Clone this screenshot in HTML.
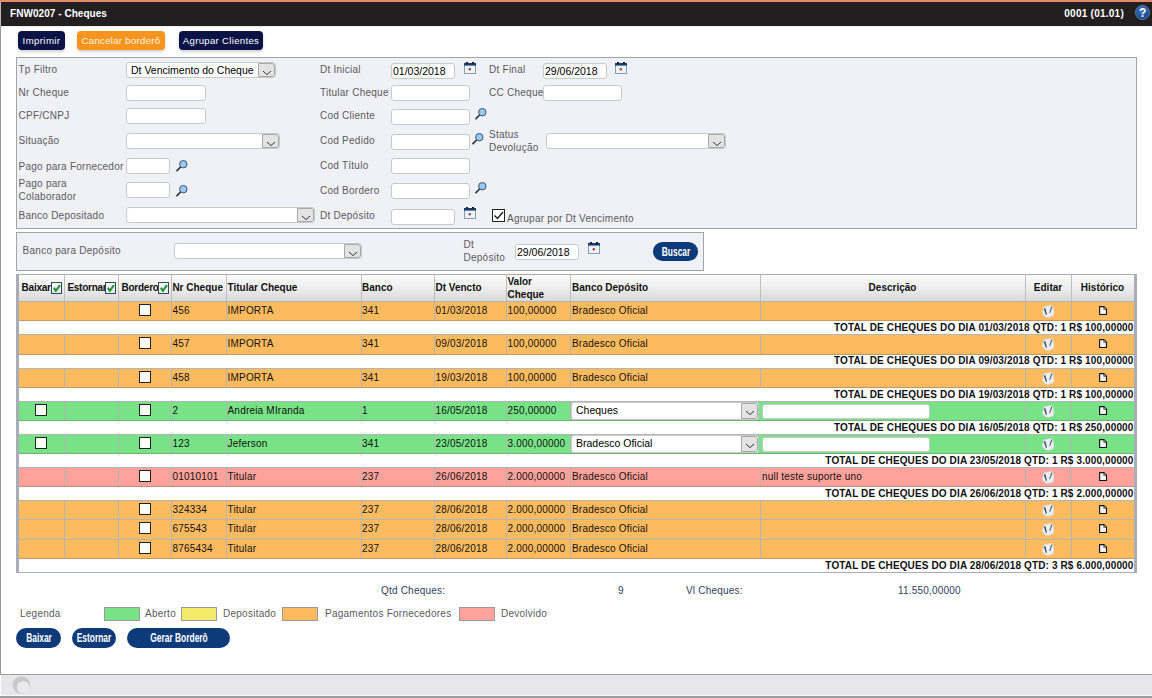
<!DOCTYPE html><html><head><meta charset="utf-8"><style>
*{box-sizing:border-box}
html,body{margin:0;padding:0;width:1152px;height:698px;overflow:hidden;background:#fff;font-family:"Liberation Sans",sans-serif}
.t{position:absolute;white-space:nowrap;line-height:12px;font-size:10px}
.lbl{color:#5a5a5a;letter-spacing:0.25px}
.blk{color:#111}
.hd{font-weight:bold;color:#111}
.inp{position:absolute;background:#fff;border:1px solid #c9c9c9;border-radius:3px;font-size:10.5px;line-height:14px;padding-left:1px;color:#000}
.sel{position:absolute;background:#fff;border:1px solid #c9c9c9;border-radius:3px;overflow:hidden}
.sv{position:absolute;left:4px;top:1px;font-size:10.5px;line-height:13px;color:#000;white-space:nowrap}
.sb{position:absolute;right:0;top:0;bottom:0;background:#e3e3e3;border:1px solid #a8a8a8;border-radius:0 3px 3px 0}
.ic{position:absolute}
.cb{position:absolute;background:#fff;border:1.5px solid #222;box-sizing:content-box}
.btn{position:absolute;color:#fff;font-size:10px;letter-spacing:0.1px;text-align:center;line-height:19px;white-space:nowrap}
</style></head><body>
<div style="position:absolute;left:0px;top:0px;width:1152px;height:2px;background:#e48a68"></div>
<div style="position:absolute;left:0px;top:2px;width:1152px;height:24px;background:#231f20"></div>
<div class="t " style="left:10px;top:8px;color:#fff;font-weight:bold;font-size:10px;letter-spacing:0.05px">FNW0207 - Cheques</div>
<div class="t" style="right:28px;top:8px;color:#fff;font-weight:bold;font-size:10px;letter-spacing:0.25px">0001 (01.01)</div>
<svg class="ic" style="left:1135px;top:5px" width="15" height="15" viewBox="0 0 15 15"><defs><radialGradient id="hg" cx="0.45" cy="0.35" r="0.7"><stop offset="0" stop-color="#3f76c0"/><stop offset="1" stop-color="#123f86"/></radialGradient></defs><circle cx="7.5" cy="7.5" r="7" fill="url(#hg)" stroke="#6a92c8" stroke-width="0.8"/><text x="7.6" y="12" text-anchor="middle" font-family="Liberation Sans" font-weight="bold" font-size="12" fill="#fff">?</text></svg>
<div style="position:absolute;left:0px;top:2px;width:1px;height:24px;background:#bdbdbd"></div>
<div style="position:absolute;left:1px;top:26px;width:1151px;height:1px;background:#ececec"></div>
<div style="position:absolute;left:0px;top:26px;width:1px;height:648px;background:#9a9a9a"></div>
<div class="btn" style="left:18px;top:31px;width:47px;height:19px;background:#0b1245;border-radius:4px;box-shadow:0 2px 3px rgba(0,0,0,0.18);font-size:9.6px;letter-spacing:0.4px;line-height:20px">Imprimir</div>
<div class="btn" style="left:77px;top:31px;width:88px;height:19px;background:#f7941d;border-radius:4px;color:#fff6e0;box-shadow:0 2px 3px rgba(0,0,0,0.18);font-size:9.6px;letter-spacing:0.3px;line-height:20px">Cancelar borderô</div>
<div class="btn" style="left:179px;top:31px;width:84px;height:19px;background:#0b1245;border-radius:4px;box-shadow:0 2px 3px rgba(0,0,0,0.18);font-size:9.6px;letter-spacing:0.3px;line-height:20px">Agrupar Clientes</div>
<div style="position:absolute;left:16px;top:57px;width:1121px;height:172px;background:#f0f0f7;border:1px solid #a4a4a4"></div>
<div class="t lbl" style="left:18.5px;top:64px;">Tp Filtro</div>
<div class="t lbl" style="left:18.5px;top:87px;">Nr Cheque</div>
<div class="t lbl" style="left:18.5px;top:110px;">CPF/CNPJ</div>
<div class="t lbl" style="left:18.5px;top:135px;">Situação</div>
<div class="t lbl" style="left:18.5px;top:160.5px;">Pago para Fornecedor</div>
<div class="t lbl" style="left:18.5px;top:178px;">Pago para</div>
<div class="t lbl" style="left:18.5px;top:191px;">Colaborador</div>
<div class="t lbl" style="left:18.5px;top:210px;">Banco Depositado</div>
<div class="t lbl" style="left:320px;top:64px;">Dt Inicial</div>
<div class="t lbl" style="left:320px;top:87px;">Titular Cheque</div>
<div class="t lbl" style="left:320px;top:109.5px;">Cod Cliente</div>
<div class="t lbl" style="left:320px;top:135px;">Cod Pedido</div>
<div class="t lbl" style="left:320px;top:159.7px;">Cod Título</div>
<div class="t lbl" style="left:320px;top:185px;">Cod Bordero</div>
<div class="t lbl" style="left:320px;top:210px;">Dt Depósito</div>
<div class="t lbl" style="left:489px;top:64px;">Dt Final</div>
<div class="t lbl" style="left:489px;top:87px;">CC Cheque</div>
<div class="t lbl" style="left:489px;top:129px;">Status</div>
<div class="t lbl" style="left:489px;top:142px;">Devolução</div>
<div class="sel" style="left:126px;top:62px;width:150px;height:16px"><span class="sv">Dt Vencimento do Cheque</span><div class="sb" style="width:17px"><svg width="10" height="6" viewBox="0 0 10 6" style="position:absolute;left:3px;top:6px"><path d="M1 1 L5 4.6 L9 1" fill="none" stroke="#333" stroke-width="1"/></svg></div></div>
<div class="inp" style="left:126px;top:85px;width:80px;height:16px"></div>
<div class="inp" style="left:126px;top:108px;width:80px;height:16px"></div>
<div class="sel" style="left:126px;top:133px;width:154px;height:16px"><span class="sv"></span><div class="sb" style="width:17px"><svg width="10" height="6" viewBox="0 0 10 6" style="position:absolute;left:3px;top:6px"><path d="M1 1 L5 4.6 L9 1" fill="none" stroke="#333" stroke-width="1"/></svg></div></div>
<div class="inp" style="left:126px;top:158px;width:44px;height:16px"></div>
<svg class="ic" style="left:176px;top:160px" width="13" height="12" viewBox="0 0 13 12"><path d="M1 10.6 L4.6 7" stroke="#333" stroke-width="1.7" stroke-linecap="round"/><circle cx="7.3" cy="4.2" r="3.7" fill="#9ccaf6" stroke="#3a4f6a" stroke-width="1"/></svg>
<div class="inp" style="left:126px;top:182px;width:44px;height:16px"></div>
<svg class="ic" style="left:176px;top:185px" width="13" height="12" viewBox="0 0 13 12"><path d="M1 10.6 L4.6 7" stroke="#333" stroke-width="1.7" stroke-linecap="round"/><circle cx="7.3" cy="4.2" r="3.7" fill="#9ccaf6" stroke="#3a4f6a" stroke-width="1"/></svg>
<div class="sel" style="left:126px;top:207px;width:189px;height:16px"><span class="sv"></span><div class="sb" style="width:17px"><svg width="10" height="6" viewBox="0 0 10 6" style="position:absolute;left:3px;top:6px"><path d="M1 1 L5 4.6 L9 1" fill="none" stroke="#333" stroke-width="1"/></svg></div></div>
<div class="inp" style="left:391px;top:63px;width:64px;height:16px">01/03/2018</div>
<svg class="ic" style="left:464px;top:62px" width="12" height="12" viewBox="0 0 12 12"><rect x="0.5" y="2.5" width="11" height="9" fill="#e8f6f6" stroke="#8a9ab0" stroke-width="1"/><rect x="0" y="1" width="12" height="2.6" fill="#1c3a6a"/><rect x="2" y="0" width="2" height="1.5" fill="#0a1a3a"/><rect x="8" y="0" width="2" height="1.5" fill="#0a1a3a"/><circle cx="5.8" cy="7.2" r="1.2" fill="#c03030"/></svg>
<div class="inp" style="left:391px;top:85px;width:79px;height:16px"></div>
<div class="inp" style="left:391px;top:109px;width:79px;height:16px"></div>
<svg class="ic" style="left:475px;top:108px" width="13" height="12" viewBox="0 0 13 12"><path d="M1 10.6 L4.6 7" stroke="#333" stroke-width="1.7" stroke-linecap="round"/><circle cx="7.3" cy="4.2" r="3.7" fill="#9ccaf6" stroke="#3a4f6a" stroke-width="1"/></svg>
<div class="inp" style="left:391px;top:134px;width:79px;height:16px"></div>
<svg class="ic" style="left:472px;top:133px" width="13" height="12" viewBox="0 0 13 12"><path d="M1 10.6 L4.6 7" stroke="#333" stroke-width="1.7" stroke-linecap="round"/><circle cx="7.3" cy="4.2" r="3.7" fill="#9ccaf6" stroke="#3a4f6a" stroke-width="1"/></svg>
<div class="inp" style="left:391px;top:158px;width:79px;height:16px"></div>
<div class="inp" style="left:391px;top:183px;width:79px;height:16px"></div>
<svg class="ic" style="left:475px;top:182px" width="13" height="12" viewBox="0 0 13 12"><path d="M1 10.6 L4.6 7" stroke="#333" stroke-width="1.7" stroke-linecap="round"/><circle cx="7.3" cy="4.2" r="3.7" fill="#9ccaf6" stroke="#3a4f6a" stroke-width="1"/></svg>
<div class="inp" style="left:391px;top:209px;width:64px;height:16px"></div>
<svg class="ic" style="left:464px;top:207px" width="12" height="12" viewBox="0 0 12 12"><rect x="0.5" y="2.5" width="11" height="9" fill="#e8f6f6" stroke="#8a9ab0" stroke-width="1"/><rect x="0" y="1" width="12" height="2.6" fill="#1c3a6a"/><rect x="2" y="0" width="2" height="1.5" fill="#0a1a3a"/><rect x="8" y="0" width="2" height="1.5" fill="#0a1a3a"/><circle cx="5.8" cy="7.2" r="1.2" fill="#c03030"/></svg>
<div class="cb" style="left:492px;top:209px;width:11px;height:11px"><svg width="11" height="11" viewBox="0 0 11 11" style="position:absolute;left:0;top:0"><path d="M1.5 5.5 L4.5 8.5 L10 2" fill="none" stroke="#222" stroke-width="1.5"/></svg></div>
<div class="t lbl" style="left:507px;top:213px;">Agrupar por Dt Vencimento</div>
<div class="inp" style="left:543px;top:63px;width:64px;height:16px">29/06/2018</div>
<svg class="ic" style="left:615px;top:62px" width="12" height="12" viewBox="0 0 12 12"><rect x="0.5" y="2.5" width="11" height="9" fill="#e8f6f6" stroke="#8a9ab0" stroke-width="1"/><rect x="0" y="1" width="12" height="2.6" fill="#1c3a6a"/><rect x="2" y="0" width="2" height="1.5" fill="#0a1a3a"/><rect x="8" y="0" width="2" height="1.5" fill="#0a1a3a"/><circle cx="5.8" cy="7.2" r="1.2" fill="#c03030"/></svg>
<div class="inp" style="left:543px;top:85px;width:79px;height:16px"></div>
<div class="sel" style="left:546px;top:133px;width:180px;height:16px"><span class="sv"></span><div class="sb" style="width:17px"><svg width="10" height="6" viewBox="0 0 10 6" style="position:absolute;left:3px;top:6px"><path d="M1 1 L5 4.6 L9 1" fill="none" stroke="#333" stroke-width="1"/></svg></div></div>
<div style="position:absolute;left:16px;top:232px;width:688px;height:39px;background:#f0f0f7;border:1px solid #a4a4a4"></div>
<div class="t lbl" style="left:22.6px;top:245px;">Banco para Depósito</div>
<div class="sel" style="left:174px;top:243px;width:188px;height:16px"><span class="sv"></span><div class="sb" style="width:17px"><svg width="10" height="6" viewBox="0 0 10 6" style="position:absolute;left:3px;top:6px"><path d="M1 1 L5 4.6 L9 1" fill="none" stroke="#333" stroke-width="1"/></svg></div></div>
<div class="t lbl" style="left:463.5px;top:239px;">Dt</div>
<div class="t lbl" style="left:463.5px;top:252px;">Depósito</div>
<div class="inp" style="left:515px;top:244px;width:64px;height:16px">29/06/2018</div>
<svg class="ic" style="left:588px;top:242px" width="12" height="12" viewBox="0 0 12 12"><rect x="0.5" y="2.5" width="11" height="9" fill="#e8f6f6" stroke="#8a9ab0" stroke-width="1"/><rect x="0" y="1" width="12" height="2.6" fill="#1c3a6a"/><rect x="2" y="0" width="2" height="1.5" fill="#0a1a3a"/><rect x="8" y="0" width="2" height="1.5" fill="#0a1a3a"/><circle cx="5.8" cy="7.2" r="1.2" fill="#c03030"/></svg>
<div class="btn" style="left:653px;top:242px;width:45px;height:19px;background:#0d3a78;border-radius:10px;font-weight:bold;font-size:12px;letter-spacing:0;line-height:20px"><span style="position:absolute;left:50%;top:0;transform:translateX(-50%) scaleX(0.7)">Buscar</span></div>
<div style="position:absolute;left:16px;top:274px;width:1121px;height:299px;background:#fff"></div>
<div style="position:absolute;left:19px;top:274px;width:1115px;height:27px;background:linear-gradient(#fdfdfd,#f0f0f0 45%,#d9d9d9)"></div>
<div style="position:absolute;left:16px;top:274px;width:1121px;height:1px;background:#a9a9a9"></div>
<div style="position:absolute;left:19px;top:301px;width:1115px;height:1px;background:#b0b0b0"></div>
<div style="position:absolute;left:64px;top:274px;width:1px;height:27px;background:#bdbdbd"></div>
<div style="position:absolute;left:118px;top:274px;width:1px;height:27px;background:#bdbdbd"></div>
<div style="position:absolute;left:171px;top:274px;width:1px;height:27px;background:#bdbdbd"></div>
<div style="position:absolute;left:226px;top:274px;width:1px;height:27px;background:#bdbdbd"></div>
<div style="position:absolute;left:361px;top:274px;width:1px;height:27px;background:#bdbdbd"></div>
<div style="position:absolute;left:434px;top:274px;width:1px;height:27px;background:#bdbdbd"></div>
<div style="position:absolute;left:506px;top:274px;width:1px;height:27px;background:#bdbdbd"></div>
<div style="position:absolute;left:570px;top:274px;width:1px;height:27px;background:#bdbdbd"></div>
<div style="position:absolute;left:760px;top:274px;width:1px;height:27px;background:#bdbdbd"></div>
<div style="position:absolute;left:1025px;top:274px;width:1px;height:27px;background:#bdbdbd"></div>
<div style="position:absolute;left:1071px;top:274px;width:1px;height:27px;background:#bdbdbd"></div>
<div class="t hd" style="left:21.6px;top:281.5px;letter-spacing:-0.25px">Baixar</div>
<div class="t hd" style="left:67.4px;top:281.5px;letter-spacing:-0.25px">Estornar</div>
<div class="t hd" style="left:121.5px;top:281.5px;letter-spacing:-0.25px">Bordero</div>
<div class="t hd" style="left:172.4px;top:281.5px;">Nr Cheque</div>
<div class="t hd" style="left:227.5px;top:281.5px;">Titular Cheque</div>
<div class="t hd" style="left:362px;top:281.5px;">Banco</div>
<div class="t hd" style="left:435.5px;top:281.5px;">Dt Vencto</div>
<div class="t hd" style="left:572px;top:281.5px;">Banco Depósito</div>
<div class="t hd" style="left:507.5px;top:276.3px;">Valor</div>
<div class="t hd" style="left:507.5px;top:288.5px;">Cheque</div>
<div class="t hd" style="left:760px;width:265px;text-align:center;top:281.5px">Descrição</div>
<div class="t hd" style="left:1025px;width:46px;text-align:center;top:281.5px">Editar</div>
<div class="t hd" style="left:1071px;width:63px;text-align:center;top:281.5px">Histórico</div>
<div style="position:absolute;left:51px;top:282px;width:11px;height:12px;border:1.1px solid #33485a;background:linear-gradient(#f4f8f8,#e2ecea)"><svg width="9" height="10" viewBox="0 0 9 10" style="position:absolute;left:0.5px;top:0.8px"><path d="M1 3.8 L2.8 6.9 L7 1.2" fill="none" stroke="#22902c" stroke-width="2" stroke-linejoin="round"/></svg></div>
<div style="position:absolute;left:105px;top:282px;width:11px;height:12px;border:1.1px solid #33485a;background:linear-gradient(#f4f8f8,#e2ecea)"><svg width="9" height="10" viewBox="0 0 9 10" style="position:absolute;left:0.5px;top:0.8px"><path d="M1 3.8 L2.8 6.9 L7 1.2" fill="none" stroke="#22902c" stroke-width="2" stroke-linejoin="round"/></svg></div>
<div style="position:absolute;left:158px;top:282px;width:11px;height:12px;border:1.1px solid #33485a;background:linear-gradient(#f4f8f8,#e2ecea)"><svg width="9" height="10" viewBox="0 0 9 10" style="position:absolute;left:0.5px;top:0.8px"><path d="M1 3.8 L2.8 6.9 L7 1.2" fill="none" stroke="#22902c" stroke-width="2" stroke-linejoin="round"/></svg></div>
<div style="position:absolute;left:19px;top:301px;width:1115px;height:20px;background:#fdbb5f"></div>
<div style="position:absolute;left:19px;top:301px;width:1115px;height:1px;background:#b4b4b4"></div>
<div style="position:absolute;left:19px;top:320px;width:1115px;height:1px;background:rgba(90,90,90,0.35)"></div>
<div style="position:absolute;left:64px;top:301px;width:1px;height:19px;background:#b4b4b4"></div>
<div style="position:absolute;left:118px;top:301px;width:1px;height:19px;background:#b4b4b4"></div>
<div style="position:absolute;left:171px;top:301px;width:1px;height:19px;background:#b4b4b4"></div>
<div style="position:absolute;left:226px;top:301px;width:1px;height:19px;background:#b4b4b4"></div>
<div style="position:absolute;left:361px;top:301px;width:1px;height:19px;background:#b4b4b4"></div>
<div style="position:absolute;left:434px;top:301px;width:1px;height:19px;background:#b4b4b4"></div>
<div style="position:absolute;left:506px;top:301px;width:1px;height:19px;background:#b4b4b4"></div>
<div style="position:absolute;left:570px;top:301px;width:1px;height:19px;background:#b4b4b4"></div>
<div style="position:absolute;left:760px;top:301px;width:1px;height:19px;background:#b4b4b4"></div>
<div style="position:absolute;left:1025px;top:301px;width:1px;height:19px;background:#b4b4b4"></div>
<div style="position:absolute;left:1071px;top:301px;width:1px;height:19px;background:#b4b4b4"></div>
<div class="cb" style="left:139px;top:304.2px;width:10px;height:10px"></div>
<div class="t blk" style="left:172.5px;top:305.0px;letter-spacing:0.2px">456</div>
<div class="t blk" style="left:227.5px;top:305.0px;letter-spacing:0.2px">IMPORTA</div>
<div class="t blk" style="left:362px;top:305.0px;letter-spacing:0.2px">341</div>
<div class="t blk" style="left:435.5px;top:305.0px;letter-spacing:0.2px">01/03/2018</div>
<div class="t blk" style="left:507.5px;top:305.0px;letter-spacing:0.2px">100,00000</div>
<div class="t blk" style="left:572px;top:305.0px;letter-spacing:0.2px">Bradesco Oficial</div>
<svg class="ic" style="left:1042px;top:304.7px" width="13" height="13" viewBox="0 0 13 13"><path d="M2 1.8 L9.6 0.2 L11.3 2.6 L12 8 L11 11 L6.5 12.4 L3.5 12 L0.2 8.5 L1 5 Z" fill="#eceff1" stroke="#d0d4d8" stroke-width="0.6"/><path d="M1.8 3.6 L3.4 3.2 L4.9 9.6 L3.9 10 Z" fill="#34495a"/><path d="M9.2 1.4 L10.4 1.8 L8.1 8.2 L7.3 7.8 Z" fill="#4a6070"/></svg>
<svg class="ic" style="left:1098.5px;top:306px" width="9" height="10" viewBox="0 0 9 10"><path d="M0.6 0.6 H5 L7.5 3.1 V8.5 H0.6 Z" fill="#f4f4f4" stroke="#111" stroke-width="1.1" stroke-linejoin="round"/><path d="M4.8 0.9 V3.3 H7.2" fill="#bbb" stroke="#222" stroke-width="0.7"/></svg>
<div class="t" style="right:18.5px;top:322.0px;font-weight:bold;color:#111;font-size:10px;letter-spacing:0.13px">TOTAL DE CHEQUES DO DIA 01/03/2018 QTD: 1 R$ 100,00000</div>
<div style="position:absolute;left:19px;top:334px;width:1115px;height:21px;background:#fdbb5f"></div>
<div style="position:absolute;left:19px;top:334px;width:1115px;height:1px;background:#b4b4b4"></div>
<div style="position:absolute;left:19px;top:354px;width:1115px;height:1px;background:rgba(90,90,90,0.35)"></div>
<div style="position:absolute;left:64px;top:334px;width:1px;height:20px;background:#b4b4b4"></div>
<div style="position:absolute;left:118px;top:334px;width:1px;height:20px;background:#b4b4b4"></div>
<div style="position:absolute;left:171px;top:334px;width:1px;height:20px;background:#b4b4b4"></div>
<div style="position:absolute;left:226px;top:334px;width:1px;height:20px;background:#b4b4b4"></div>
<div style="position:absolute;left:361px;top:334px;width:1px;height:20px;background:#b4b4b4"></div>
<div style="position:absolute;left:434px;top:334px;width:1px;height:20px;background:#b4b4b4"></div>
<div style="position:absolute;left:506px;top:334px;width:1px;height:20px;background:#b4b4b4"></div>
<div style="position:absolute;left:570px;top:334px;width:1px;height:20px;background:#b4b4b4"></div>
<div style="position:absolute;left:760px;top:334px;width:1px;height:20px;background:#b4b4b4"></div>
<div style="position:absolute;left:1025px;top:334px;width:1px;height:20px;background:#b4b4b4"></div>
<div style="position:absolute;left:1071px;top:334px;width:1px;height:20px;background:#b4b4b4"></div>
<div class="cb" style="left:139px;top:337.2px;width:10px;height:10px"></div>
<div class="t blk" style="left:172.5px;top:338.0px;letter-spacing:0.2px">457</div>
<div class="t blk" style="left:227.5px;top:338.0px;letter-spacing:0.2px">IMPORTA</div>
<div class="t blk" style="left:362px;top:338.0px;letter-spacing:0.2px">341</div>
<div class="t blk" style="left:435.5px;top:338.0px;letter-spacing:0.2px">09/03/2018</div>
<div class="t blk" style="left:507.5px;top:338.0px;letter-spacing:0.2px">100,00000</div>
<div class="t blk" style="left:572px;top:338.0px;letter-spacing:0.2px">Bradesco Oficial</div>
<svg class="ic" style="left:1042px;top:337.7px" width="13" height="13" viewBox="0 0 13 13"><path d="M2 1.8 L9.6 0.2 L11.3 2.6 L12 8 L11 11 L6.5 12.4 L3.5 12 L0.2 8.5 L1 5 Z" fill="#eceff1" stroke="#d0d4d8" stroke-width="0.6"/><path d="M1.8 3.6 L3.4 3.2 L4.9 9.6 L3.9 10 Z" fill="#34495a"/><path d="M9.2 1.4 L10.4 1.8 L8.1 8.2 L7.3 7.8 Z" fill="#4a6070"/></svg>
<svg class="ic" style="left:1098.5px;top:339px" width="9" height="10" viewBox="0 0 9 10"><path d="M0.6 0.6 H5 L7.5 3.1 V8.5 H0.6 Z" fill="#f4f4f4" stroke="#111" stroke-width="1.1" stroke-linejoin="round"/><path d="M4.8 0.9 V3.3 H7.2" fill="#bbb" stroke="#222" stroke-width="0.7"/></svg>
<div class="t" style="right:18.5px;top:355.0px;font-weight:bold;color:#111;font-size:10px;letter-spacing:0.13px">TOTAL DE CHEQUES DO DIA 09/03/2018 QTD: 1 R$ 100,00000</div>
<div style="position:absolute;left:19px;top:368px;width:1115px;height:20px;background:#fdbb5f"></div>
<div style="position:absolute;left:19px;top:368px;width:1115px;height:1px;background:#b4b4b4"></div>
<div style="position:absolute;left:19px;top:387px;width:1115px;height:1px;background:rgba(90,90,90,0.35)"></div>
<div style="position:absolute;left:64px;top:368px;width:1px;height:19px;background:#b4b4b4"></div>
<div style="position:absolute;left:118px;top:368px;width:1px;height:19px;background:#b4b4b4"></div>
<div style="position:absolute;left:171px;top:368px;width:1px;height:19px;background:#b4b4b4"></div>
<div style="position:absolute;left:226px;top:368px;width:1px;height:19px;background:#b4b4b4"></div>
<div style="position:absolute;left:361px;top:368px;width:1px;height:19px;background:#b4b4b4"></div>
<div style="position:absolute;left:434px;top:368px;width:1px;height:19px;background:#b4b4b4"></div>
<div style="position:absolute;left:506px;top:368px;width:1px;height:19px;background:#b4b4b4"></div>
<div style="position:absolute;left:570px;top:368px;width:1px;height:19px;background:#b4b4b4"></div>
<div style="position:absolute;left:760px;top:368px;width:1px;height:19px;background:#b4b4b4"></div>
<div style="position:absolute;left:1025px;top:368px;width:1px;height:19px;background:#b4b4b4"></div>
<div style="position:absolute;left:1071px;top:368px;width:1px;height:19px;background:#b4b4b4"></div>
<div class="cb" style="left:139px;top:371.2px;width:10px;height:10px"></div>
<div class="t blk" style="left:172.5px;top:372.0px;letter-spacing:0.2px">458</div>
<div class="t blk" style="left:227.5px;top:372.0px;letter-spacing:0.2px">IMPORTA</div>
<div class="t blk" style="left:362px;top:372.0px;letter-spacing:0.2px">341</div>
<div class="t blk" style="left:435.5px;top:372.0px;letter-spacing:0.2px">19/03/2018</div>
<div class="t blk" style="left:507.5px;top:372.0px;letter-spacing:0.2px">100,00000</div>
<div class="t blk" style="left:572px;top:372.0px;letter-spacing:0.2px">Bradesco Oficial</div>
<svg class="ic" style="left:1042px;top:371.7px" width="13" height="13" viewBox="0 0 13 13"><path d="M2 1.8 L9.6 0.2 L11.3 2.6 L12 8 L11 11 L6.5 12.4 L3.5 12 L0.2 8.5 L1 5 Z" fill="#eceff1" stroke="#d0d4d8" stroke-width="0.6"/><path d="M1.8 3.6 L3.4 3.2 L4.9 9.6 L3.9 10 Z" fill="#34495a"/><path d="M9.2 1.4 L10.4 1.8 L8.1 8.2 L7.3 7.8 Z" fill="#4a6070"/></svg>
<svg class="ic" style="left:1098.5px;top:373px" width="9" height="10" viewBox="0 0 9 10"><path d="M0.6 0.6 H5 L7.5 3.1 V8.5 H0.6 Z" fill="#f4f4f4" stroke="#111" stroke-width="1.1" stroke-linejoin="round"/><path d="M4.8 0.9 V3.3 H7.2" fill="#bbb" stroke="#222" stroke-width="0.7"/></svg>
<div class="t" style="right:18.5px;top:389.0px;font-weight:bold;color:#111;font-size:10px;letter-spacing:0.13px">TOTAL DE CHEQUES DO DIA 19/03/2018 QTD: 1 R$ 100,00000</div>
<div style="position:absolute;left:19px;top:401px;width:1115px;height:20px;background:#78e386"></div>
<div style="position:absolute;left:19px;top:401px;width:1115px;height:1px;background:#b4b4b4"></div>
<div style="position:absolute;left:19px;top:420px;width:1115px;height:1px;background:rgba(90,90,90,0.35)"></div>
<div style="position:absolute;left:64px;top:401px;width:1px;height:19px;background:#b4b4b4"></div>
<div style="position:absolute;left:118px;top:401px;width:1px;height:19px;background:#b4b4b4"></div>
<div style="position:absolute;left:171px;top:401px;width:1px;height:19px;background:#b4b4b4"></div>
<div style="position:absolute;left:226px;top:401px;width:1px;height:19px;background:#b4b4b4"></div>
<div style="position:absolute;left:361px;top:401px;width:1px;height:19px;background:#b4b4b4"></div>
<div style="position:absolute;left:434px;top:401px;width:1px;height:19px;background:#b4b4b4"></div>
<div style="position:absolute;left:506px;top:401px;width:1px;height:19px;background:#b4b4b4"></div>
<div style="position:absolute;left:570px;top:401px;width:1px;height:19px;background:#b4b4b4"></div>
<div style="position:absolute;left:1025px;top:401px;width:1px;height:19px;background:#b4b4b4"></div>
<div style="position:absolute;left:1071px;top:401px;width:1px;height:19px;background:#b4b4b4"></div>
<div class="cb" style="left:139px;top:404.2px;width:10px;height:10px"></div>
<div class="cb" style="left:35px;top:404.2px;width:10px;height:10px"></div>
<div class="t blk" style="left:172.5px;top:405.0px;letter-spacing:0.2px">2</div>
<div class="t blk" style="left:227.5px;top:405.0px;letter-spacing:0.2px">Andreia MIranda</div>
<div class="t blk" style="left:362px;top:405.0px;letter-spacing:0.2px">1</div>
<div class="t blk" style="left:435.5px;top:405.0px;letter-spacing:0.2px">16/05/2018</div>
<div class="t blk" style="left:507.5px;top:405.0px;letter-spacing:0.2px">250,00000</div>
<div class="sel" style="left:571px;top:402px;width:188px;height:18px"><span class="sv">Cheques</span><div class="sb" style="width:17px"><svg width="10" height="6" viewBox="0 0 10 6" style="position:absolute;left:3px;top:6px"><path d="M1 1 L5 4.6 L9 1" fill="none" stroke="#333" stroke-width="1"/></svg></div></div>
<div class="inp" style="left:762px;top:404px;width:168px;height:15px"></div>
<svg class="ic" style="left:1042px;top:404.7px" width="13" height="13" viewBox="0 0 13 13"><path d="M2 1.8 L9.6 0.2 L11.3 2.6 L12 8 L11 11 L6.5 12.4 L3.5 12 L0.2 8.5 L1 5 Z" fill="#eceff1" stroke="#d0d4d8" stroke-width="0.6"/><path d="M1.8 3.6 L3.4 3.2 L4.9 9.6 L3.9 10 Z" fill="#34495a"/><path d="M9.2 1.4 L10.4 1.8 L8.1 8.2 L7.3 7.8 Z" fill="#4a6070"/></svg>
<svg class="ic" style="left:1098.5px;top:406px" width="9" height="10" viewBox="0 0 9 10"><path d="M0.6 0.6 H5 L7.5 3.1 V8.5 H0.6 Z" fill="#f4f4f4" stroke="#111" stroke-width="1.1" stroke-linejoin="round"/><path d="M4.8 0.9 V3.3 H7.2" fill="#bbb" stroke="#222" stroke-width="0.7"/></svg>
<div class="t" style="right:18.5px;top:422.0px;font-weight:bold;color:#111;font-size:10px;letter-spacing:0.13px">TOTAL DE CHEQUES DO DIA 16/05/2018 QTD: 1 R$ 250,00000</div>
<div style="position:absolute;left:19px;top:434px;width:1115px;height:20px;background:#78e386"></div>
<div style="position:absolute;left:19px;top:434px;width:1115px;height:1px;background:#b4b4b4"></div>
<div style="position:absolute;left:19px;top:453px;width:1115px;height:1px;background:rgba(90,90,90,0.35)"></div>
<div style="position:absolute;left:64px;top:434px;width:1px;height:19px;background:#b4b4b4"></div>
<div style="position:absolute;left:118px;top:434px;width:1px;height:19px;background:#b4b4b4"></div>
<div style="position:absolute;left:171px;top:434px;width:1px;height:19px;background:#b4b4b4"></div>
<div style="position:absolute;left:226px;top:434px;width:1px;height:19px;background:#b4b4b4"></div>
<div style="position:absolute;left:361px;top:434px;width:1px;height:19px;background:#b4b4b4"></div>
<div style="position:absolute;left:434px;top:434px;width:1px;height:19px;background:#b4b4b4"></div>
<div style="position:absolute;left:506px;top:434px;width:1px;height:19px;background:#b4b4b4"></div>
<div style="position:absolute;left:570px;top:434px;width:1px;height:19px;background:#b4b4b4"></div>
<div style="position:absolute;left:1025px;top:434px;width:1px;height:19px;background:#b4b4b4"></div>
<div style="position:absolute;left:1071px;top:434px;width:1px;height:19px;background:#b4b4b4"></div>
<div class="cb" style="left:139px;top:437.2px;width:10px;height:10px"></div>
<div class="cb" style="left:35px;top:437.2px;width:10px;height:10px"></div>
<div class="t blk" style="left:172.5px;top:438.0px;letter-spacing:0.2px">123</div>
<div class="t blk" style="left:227.5px;top:438.0px;letter-spacing:0.2px">Jeferson</div>
<div class="t blk" style="left:362px;top:438.0px;letter-spacing:0.2px">341</div>
<div class="t blk" style="left:435.5px;top:438.0px;letter-spacing:0.2px">23/05/2018</div>
<div class="t blk" style="left:507.5px;top:438.0px;letter-spacing:0.2px">3.000,00000</div>
<div class="sel" style="left:571px;top:435px;width:188px;height:18px"><span class="sv">Bradesco Oficial</span><div class="sb" style="width:17px"><svg width="10" height="6" viewBox="0 0 10 6" style="position:absolute;left:3px;top:6px"><path d="M1 1 L5 4.6 L9 1" fill="none" stroke="#333" stroke-width="1"/></svg></div></div>
<div class="inp" style="left:762px;top:437px;width:168px;height:15px"></div>
<svg class="ic" style="left:1042px;top:437.7px" width="13" height="13" viewBox="0 0 13 13"><path d="M2 1.8 L9.6 0.2 L11.3 2.6 L12 8 L11 11 L6.5 12.4 L3.5 12 L0.2 8.5 L1 5 Z" fill="#eceff1" stroke="#d0d4d8" stroke-width="0.6"/><path d="M1.8 3.6 L3.4 3.2 L4.9 9.6 L3.9 10 Z" fill="#34495a"/><path d="M9.2 1.4 L10.4 1.8 L8.1 8.2 L7.3 7.8 Z" fill="#4a6070"/></svg>
<svg class="ic" style="left:1098.5px;top:439px" width="9" height="10" viewBox="0 0 9 10"><path d="M0.6 0.6 H5 L7.5 3.1 V8.5 H0.6 Z" fill="#f4f4f4" stroke="#111" stroke-width="1.1" stroke-linejoin="round"/><path d="M4.8 0.9 V3.3 H7.2" fill="#bbb" stroke="#222" stroke-width="0.7"/></svg>
<div class="t" style="right:18.5px;top:455.0px;font-weight:bold;color:#111;font-size:10px;letter-spacing:0.13px">TOTAL DE CHEQUES DO DIA 23/05/2018 QTD: 1 R$ 3.000,00000</div>
<div style="position:absolute;left:19px;top:467px;width:1115px;height:20px;background:#ffa29b"></div>
<div style="position:absolute;left:19px;top:467px;width:1115px;height:1px;background:#b4b4b4"></div>
<div style="position:absolute;left:19px;top:486px;width:1115px;height:1px;background:rgba(90,90,90,0.35)"></div>
<div style="position:absolute;left:64px;top:467px;width:1px;height:19px;background:#b4b4b4"></div>
<div style="position:absolute;left:118px;top:467px;width:1px;height:19px;background:#b4b4b4"></div>
<div style="position:absolute;left:171px;top:467px;width:1px;height:19px;background:#b4b4b4"></div>
<div style="position:absolute;left:226px;top:467px;width:1px;height:19px;background:#b4b4b4"></div>
<div style="position:absolute;left:361px;top:467px;width:1px;height:19px;background:#b4b4b4"></div>
<div style="position:absolute;left:434px;top:467px;width:1px;height:19px;background:#b4b4b4"></div>
<div style="position:absolute;left:506px;top:467px;width:1px;height:19px;background:#b4b4b4"></div>
<div style="position:absolute;left:570px;top:467px;width:1px;height:19px;background:#b4b4b4"></div>
<div style="position:absolute;left:760px;top:467px;width:1px;height:19px;background:#b4b4b4"></div>
<div style="position:absolute;left:1025px;top:467px;width:1px;height:19px;background:#b4b4b4"></div>
<div style="position:absolute;left:1071px;top:467px;width:1px;height:19px;background:#b4b4b4"></div>
<div class="cb" style="left:139px;top:470.2px;width:10px;height:10px"></div>
<div class="t blk" style="left:172.5px;top:471.0px;letter-spacing:0.2px">01010101</div>
<div class="t blk" style="left:227.5px;top:471.0px;letter-spacing:0.2px">Titular</div>
<div class="t blk" style="left:362px;top:471.0px;letter-spacing:0.2px">237</div>
<div class="t blk" style="left:435.5px;top:471.0px;letter-spacing:0.2px">26/06/2018</div>
<div class="t blk" style="left:507.5px;top:471.0px;letter-spacing:0.2px">2.000,00000</div>
<div class="t blk" style="left:572px;top:471.0px;letter-spacing:0.2px">Bradesco Oficial</div>
<div class="t blk" style="left:762px;top:471.0px;letter-spacing:0.2px">null teste suporte uno</div>
<svg class="ic" style="left:1042px;top:470.7px" width="13" height="13" viewBox="0 0 13 13"><path d="M2 1.8 L9.6 0.2 L11.3 2.6 L12 8 L11 11 L6.5 12.4 L3.5 12 L0.2 8.5 L1 5 Z" fill="#eceff1" stroke="#d0d4d8" stroke-width="0.6"/><path d="M1.8 3.6 L3.4 3.2 L4.9 9.6 L3.9 10 Z" fill="#34495a"/><path d="M9.2 1.4 L10.4 1.8 L8.1 8.2 L7.3 7.8 Z" fill="#4a6070"/></svg>
<svg class="ic" style="left:1098.5px;top:472px" width="9" height="10" viewBox="0 0 9 10"><path d="M0.6 0.6 H5 L7.5 3.1 V8.5 H0.6 Z" fill="#f4f4f4" stroke="#111" stroke-width="1.1" stroke-linejoin="round"/><path d="M4.8 0.9 V3.3 H7.2" fill="#bbb" stroke="#222" stroke-width="0.7"/></svg>
<div class="t" style="right:18.5px;top:488.0px;font-weight:bold;color:#111;font-size:10px;letter-spacing:0.13px">TOTAL DE CHEQUES DO DIA 26/06/2018 QTD: 1 R$ 2.000,00000</div>
<div style="position:absolute;left:19px;top:500px;width:1115px;height:20px;background:#fdbb5f"></div>
<div style="position:absolute;left:19px;top:500px;width:1115px;height:1px;background:#b4b4b4"></div>
<div style="position:absolute;left:19px;top:519px;width:1115px;height:1px;background:rgba(90,90,90,0.35)"></div>
<div style="position:absolute;left:64px;top:500px;width:1px;height:19px;background:#b4b4b4"></div>
<div style="position:absolute;left:118px;top:500px;width:1px;height:19px;background:#b4b4b4"></div>
<div style="position:absolute;left:171px;top:500px;width:1px;height:19px;background:#b4b4b4"></div>
<div style="position:absolute;left:226px;top:500px;width:1px;height:19px;background:#b4b4b4"></div>
<div style="position:absolute;left:361px;top:500px;width:1px;height:19px;background:#b4b4b4"></div>
<div style="position:absolute;left:434px;top:500px;width:1px;height:19px;background:#b4b4b4"></div>
<div style="position:absolute;left:506px;top:500px;width:1px;height:19px;background:#b4b4b4"></div>
<div style="position:absolute;left:570px;top:500px;width:1px;height:19px;background:#b4b4b4"></div>
<div style="position:absolute;left:760px;top:500px;width:1px;height:19px;background:#b4b4b4"></div>
<div style="position:absolute;left:1025px;top:500px;width:1px;height:19px;background:#b4b4b4"></div>
<div style="position:absolute;left:1071px;top:500px;width:1px;height:19px;background:#b4b4b4"></div>
<div class="cb" style="left:139px;top:503.2px;width:10px;height:10px"></div>
<div class="t blk" style="left:172.5px;top:504.0px;letter-spacing:0.2px">324334</div>
<div class="t blk" style="left:227.5px;top:504.0px;letter-spacing:0.2px">Titular</div>
<div class="t blk" style="left:362px;top:504.0px;letter-spacing:0.2px">237</div>
<div class="t blk" style="left:435.5px;top:504.0px;letter-spacing:0.2px">28/06/2018</div>
<div class="t blk" style="left:507.5px;top:504.0px;letter-spacing:0.2px">2.000,00000</div>
<div class="t blk" style="left:572px;top:504.0px;letter-spacing:0.2px">Bradesco Oficial</div>
<svg class="ic" style="left:1042px;top:503.7px" width="13" height="13" viewBox="0 0 13 13"><path d="M2 1.8 L9.6 0.2 L11.3 2.6 L12 8 L11 11 L6.5 12.4 L3.5 12 L0.2 8.5 L1 5 Z" fill="#eceff1" stroke="#d0d4d8" stroke-width="0.6"/><path d="M1.8 3.6 L3.4 3.2 L4.9 9.6 L3.9 10 Z" fill="#34495a"/><path d="M9.2 1.4 L10.4 1.8 L8.1 8.2 L7.3 7.8 Z" fill="#4a6070"/></svg>
<svg class="ic" style="left:1098.5px;top:505px" width="9" height="10" viewBox="0 0 9 10"><path d="M0.6 0.6 H5 L7.5 3.1 V8.5 H0.6 Z" fill="#f4f4f4" stroke="#111" stroke-width="1.1" stroke-linejoin="round"/><path d="M4.8 0.9 V3.3 H7.2" fill="#bbb" stroke="#222" stroke-width="0.7"/></svg>
<div style="position:absolute;left:19px;top:519px;width:1115px;height:21px;background:#fdbb5f"></div>
<div style="position:absolute;left:19px;top:519px;width:1115px;height:1px;background:#b4b4b4"></div>
<div style="position:absolute;left:19px;top:539px;width:1115px;height:1px;background:rgba(90,90,90,0.35)"></div>
<div style="position:absolute;left:64px;top:519px;width:1px;height:20px;background:#b4b4b4"></div>
<div style="position:absolute;left:118px;top:519px;width:1px;height:20px;background:#b4b4b4"></div>
<div style="position:absolute;left:171px;top:519px;width:1px;height:20px;background:#b4b4b4"></div>
<div style="position:absolute;left:226px;top:519px;width:1px;height:20px;background:#b4b4b4"></div>
<div style="position:absolute;left:361px;top:519px;width:1px;height:20px;background:#b4b4b4"></div>
<div style="position:absolute;left:434px;top:519px;width:1px;height:20px;background:#b4b4b4"></div>
<div style="position:absolute;left:506px;top:519px;width:1px;height:20px;background:#b4b4b4"></div>
<div style="position:absolute;left:570px;top:519px;width:1px;height:20px;background:#b4b4b4"></div>
<div style="position:absolute;left:760px;top:519px;width:1px;height:20px;background:#b4b4b4"></div>
<div style="position:absolute;left:1025px;top:519px;width:1px;height:20px;background:#b4b4b4"></div>
<div style="position:absolute;left:1071px;top:519px;width:1px;height:20px;background:#b4b4b4"></div>
<div class="cb" style="left:139px;top:522.2px;width:10px;height:10px"></div>
<div class="t blk" style="left:172.5px;top:523.0px;letter-spacing:0.2px">675543</div>
<div class="t blk" style="left:227.5px;top:523.0px;letter-spacing:0.2px">Titular</div>
<div class="t blk" style="left:362px;top:523.0px;letter-spacing:0.2px">237</div>
<div class="t blk" style="left:435.5px;top:523.0px;letter-spacing:0.2px">28/06/2018</div>
<div class="t blk" style="left:507.5px;top:523.0px;letter-spacing:0.2px">2.000,00000</div>
<div class="t blk" style="left:572px;top:523.0px;letter-spacing:0.2px">Bradesco Oficial</div>
<svg class="ic" style="left:1042px;top:522.7px" width="13" height="13" viewBox="0 0 13 13"><path d="M2 1.8 L9.6 0.2 L11.3 2.6 L12 8 L11 11 L6.5 12.4 L3.5 12 L0.2 8.5 L1 5 Z" fill="#eceff1" stroke="#d0d4d8" stroke-width="0.6"/><path d="M1.8 3.6 L3.4 3.2 L4.9 9.6 L3.9 10 Z" fill="#34495a"/><path d="M9.2 1.4 L10.4 1.8 L8.1 8.2 L7.3 7.8 Z" fill="#4a6070"/></svg>
<svg class="ic" style="left:1098.5px;top:524px" width="9" height="10" viewBox="0 0 9 10"><path d="M0.6 0.6 H5 L7.5 3.1 V8.5 H0.6 Z" fill="#f4f4f4" stroke="#111" stroke-width="1.1" stroke-linejoin="round"/><path d="M4.8 0.9 V3.3 H7.2" fill="#bbb" stroke="#222" stroke-width="0.7"/></svg>
<div style="position:absolute;left:19px;top:539px;width:1115px;height:20px;background:#fdbb5f"></div>
<div style="position:absolute;left:19px;top:539px;width:1115px;height:1px;background:#b4b4b4"></div>
<div style="position:absolute;left:19px;top:558px;width:1115px;height:1px;background:rgba(90,90,90,0.35)"></div>
<div style="position:absolute;left:64px;top:539px;width:1px;height:19px;background:#b4b4b4"></div>
<div style="position:absolute;left:118px;top:539px;width:1px;height:19px;background:#b4b4b4"></div>
<div style="position:absolute;left:171px;top:539px;width:1px;height:19px;background:#b4b4b4"></div>
<div style="position:absolute;left:226px;top:539px;width:1px;height:19px;background:#b4b4b4"></div>
<div style="position:absolute;left:361px;top:539px;width:1px;height:19px;background:#b4b4b4"></div>
<div style="position:absolute;left:434px;top:539px;width:1px;height:19px;background:#b4b4b4"></div>
<div style="position:absolute;left:506px;top:539px;width:1px;height:19px;background:#b4b4b4"></div>
<div style="position:absolute;left:570px;top:539px;width:1px;height:19px;background:#b4b4b4"></div>
<div style="position:absolute;left:760px;top:539px;width:1px;height:19px;background:#b4b4b4"></div>
<div style="position:absolute;left:1025px;top:539px;width:1px;height:19px;background:#b4b4b4"></div>
<div style="position:absolute;left:1071px;top:539px;width:1px;height:19px;background:#b4b4b4"></div>
<div class="cb" style="left:139px;top:542.2px;width:10px;height:10px"></div>
<div class="t blk" style="left:172.5px;top:543.0px;letter-spacing:0.2px">8765434</div>
<div class="t blk" style="left:227.5px;top:543.0px;letter-spacing:0.2px">Titular</div>
<div class="t blk" style="left:362px;top:543.0px;letter-spacing:0.2px">237</div>
<div class="t blk" style="left:435.5px;top:543.0px;letter-spacing:0.2px">28/06/2018</div>
<div class="t blk" style="left:507.5px;top:543.0px;letter-spacing:0.2px">2.000,00000</div>
<div class="t blk" style="left:572px;top:543.0px;letter-spacing:0.2px">Bradesco Oficial</div>
<svg class="ic" style="left:1042px;top:542.7px" width="13" height="13" viewBox="0 0 13 13"><path d="M2 1.8 L9.6 0.2 L11.3 2.6 L12 8 L11 11 L6.5 12.4 L3.5 12 L0.2 8.5 L1 5 Z" fill="#eceff1" stroke="#d0d4d8" stroke-width="0.6"/><path d="M1.8 3.6 L3.4 3.2 L4.9 9.6 L3.9 10 Z" fill="#34495a"/><path d="M9.2 1.4 L10.4 1.8 L8.1 8.2 L7.3 7.8 Z" fill="#4a6070"/></svg>
<svg class="ic" style="left:1098.5px;top:544px" width="9" height="10" viewBox="0 0 9 10"><path d="M0.6 0.6 H5 L7.5 3.1 V8.5 H0.6 Z" fill="#f4f4f4" stroke="#111" stroke-width="1.1" stroke-linejoin="round"/><path d="M4.8 0.9 V3.3 H7.2" fill="#bbb" stroke="#222" stroke-width="0.7"/></svg>
<div class="t" style="right:18.5px;top:560.0px;font-weight:bold;color:#111;font-size:10px;letter-spacing:0.13px">TOTAL DE CHEQUES DO DIA 28/06/2018 QTD: 3 R$ 6.000,00000</div>
<div style="position:absolute;left:16px;top:274px;width:3px;height:299px;background:#a9adb5"></div>
<div style="position:absolute;left:1134px;top:274px;width:3px;height:299px;background:#a9adb5"></div>
<div style="position:absolute;left:16px;top:572px;width:1121px;height:1px;background:#a9adb5"></div>
<div class="t " style="left:381px;top:584.9px;color:#2c3e5c;letter-spacing:0.2px">Qtd Cheques:</div>
<div class="t " style="left:618px;top:584.9px;color:#2c3e5c;letter-spacing:0.2px">9</div>
<div class="t " style="left:686px;top:584.9px;color:#2c3e5c;letter-spacing:0.2px">Vl Cheques:</div>
<div class="t " style="left:898px;top:584.9px;color:#2c3e5c;letter-spacing:0.2px">11.550,00000</div>
<div class="t lbl" style="left:20px;top:607.5px;">Legenda</div>
<div style="position:absolute;left:104px;top:607px;width:36px;height:14px;background:#78e386;border:1px solid #9a9a9a"></div>
<div style="position:absolute;left:181px;top:607px;width:36px;height:14px;background:#f4ea6a;border:1px solid #9a9a9a"></div>
<div style="position:absolute;left:282px;top:607px;width:36px;height:14px;background:#fdbb5f;border:1px solid #9a9a9a"></div>
<div style="position:absolute;left:459px;top:607px;width:36px;height:14px;background:#ffa29b;border:1px solid #9a9a9a"></div>
<div class="t lbl" style="left:145px;top:607.5px;">Aberto</div>
<div class="t lbl" style="left:223px;top:607.5px;">Depositado</div>
<div class="t lbl" style="left:325px;top:607.5px;">Pagamentos Fornecedores</div>
<div class="t lbl" style="left:501px;top:607.5px;">Devolvido</div>
<div class="btn" style="left:16px;top:628px;width:45px;height:20px;background:#0d3a78;border-radius:10px;font-weight:bold;font-size:12px;letter-spacing:0;line-height:21px"><span style="position:absolute;left:50%;top:0;transform:translateX(-50%) scaleX(0.7)">Baixar</span></div>
<div class="btn" style="left:72px;top:628px;width:44px;height:20px;background:#0d3a78;border-radius:10px;font-weight:bold;font-size:12px;letter-spacing:0;line-height:21px"><span style="position:absolute;left:50%;top:0;transform:translateX(-50%) scaleX(0.7)">Estornar</span></div>
<div class="btn" style="left:127px;top:628px;width:103px;height:20px;background:#0d3a78;border-radius:10px;font-weight:bold;font-size:12px;letter-spacing:0;line-height:21px"><span style="position:absolute;left:50%;top:0;transform:translateX(-50%) scaleX(0.7)">Gerar Borderô</span></div>
<div style="position:absolute;left:0px;top:674px;width:1152px;height:1px;background:#9c9c9c"></div>
<div style="position:absolute;left:1px;top:675px;width:1151px;height:20px;background:#e7e7eb"></div>
<div style="position:absolute;left:0px;top:695px;width:1152px;height:1px;background:#f7f7f7"></div>
<div style="position:absolute;left:0px;top:696px;width:1152px;height:2px;background:#9c9c9c"></div>
<svg class="ic" style="left:12px;top:676px" width="18" height="18" viewBox="0 0 18 18"><defs><mask id="cm"><rect width="18" height="18" fill="#fff"/><circle cx="11.2" cy="11.5" r="6.2" fill="#000"/></mask><clipPath id="cc"><circle cx="9.3" cy="9" r="8.8"/></clipPath></defs><circle cx="9.3" cy="9" r="8.8" fill="#c9c9c9" mask="url(#cm)"/><circle cx="11.2" cy="11.5" r="6.2" fill="#eaeaed" clip-path="url(#cc)"/></svg>
</body></html>
